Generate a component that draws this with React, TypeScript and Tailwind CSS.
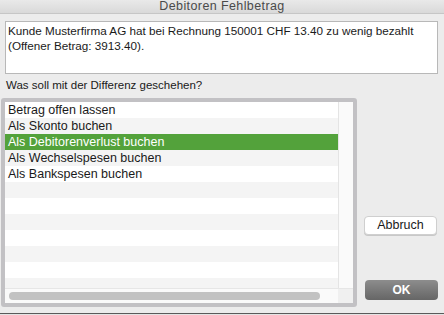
const rows = [
  "Betrag offen lassen",
  "Als Skonto buchen",
  "Als Debitorenverlust buchen",
  "Als Wechselspesen buchen",
  "Als Bankspesen buchen",
  "",
  "",
  "",
  "",
  "",
  "",
  "",
];

export default function App() {
  const selected = 2;

  return (
    <div
      className="w-[444px] h-[315px] bg-[#ececec] overflow-hidden flex flex-col text-[#1a1a1a]"
      style={{ fontFamily: '"Liberation Sans", Arial, sans-serif' }}
    >
      {/* Titelleiste */}
      <div className="h-[14px] shrink-0 bg-gradient-to-b from-[#e9e9e9] to-[#d9d9d9] border-b border-[#c6c6c6] flex items-center justify-center">
        <span className="text-[12.5px] leading-[13px] tracking-[0.4px] text-[#4a4a4a]">Debitoren Fehlbetrag</span>
      </div>

      {/* Meldung */}
      <div className="mt-[7px] mx-[5px] mr-[6px] h-[53px] shrink-0 bg-white border border-[#b8b8b8] px-[2px] pt-[1px] text-[11.7px] leading-[15px]">
        Kunde Musterfirma AG hat bei Rechnung 150001 CHF 13.40 zu wenig bezahlt
        <br />
        (Offener Betrag: 3913.40).
      </div>

      <div className="h-[24px] shrink-0 flex items-center pl-[6px] text-[11.5px]">
        Was soll mit der Differenz geschehen?
      </div>

      <div className="flex h-[209px] shrink-0">
        {/* Liste */}
        <div className="ml-[1px] w-[356px] h-full border-[4px] border-[#c2c1c4] rounded-[3px] bg-white flex flex-col overflow-hidden">
          <div className="flex flex-1 min-h-0">
            <div className="flex-1 flex flex-col overflow-hidden">
              {rows.map((r, i) => (
                <div
                  key={i}
                  className={`h-[16px] shrink-0 pl-[3px] text-[12.5px] leading-[16px] whitespace-nowrap ${
                    i === selected
                      ? "bg-[#53a23b] text-white"
                      : i % 2 === 0
                        ? "bg-white"
                        : "bg-[#f4f4f4]"
                  }`}
                >
                  {r}
                </div>
              ))}
            </div>
            <div className="w-[15px] shrink-0 bg-[#fafafa] border-l border-[#e4e4e4]" />
          </div>
          <div className="h-[15px] shrink-0 flex bg-[#fafafa] border-t border-[#e6e6e6]">
            <div className="flex-1 flex items-center pl-[4px]">
              <div className="w-[311px] h-[8px] rounded-full bg-[#c2c2c2]" />
            </div>
            <div className="w-[15px] shrink-0 bg-[#f0f0f0]" />
          </div>
        </div>

        {/* Knöpfe */}
        <div className="flex flex-col pl-[7px]">
          <button className="mt-[118px] w-[73px] h-[19px] bg-white border border-[#cfcfcf] rounded-[4px] text-[12.5px] leading-[17px] text-[#1a1a1a] shadow-[0_1px_0_#c8c8c8]">
            Abbruch
          </button>
          <button className="mt-[45px] ml-[1px] w-[73px] h-[20px] rounded-[4px] bg-gradient-to-b from-[#8d8d8d] to-[#666666] text-white text-[12px] leading-[20px] font-bold">
            OK
          </button>
        </div>
      </div>

      <div className="h-[6px] shrink-0" />
      <div className="h-[1px] shrink-0 bg-[#5a5a5a]" />
      <div className="flex-1 bg-[#e4e4e4]" />
    </div>
  );
}
